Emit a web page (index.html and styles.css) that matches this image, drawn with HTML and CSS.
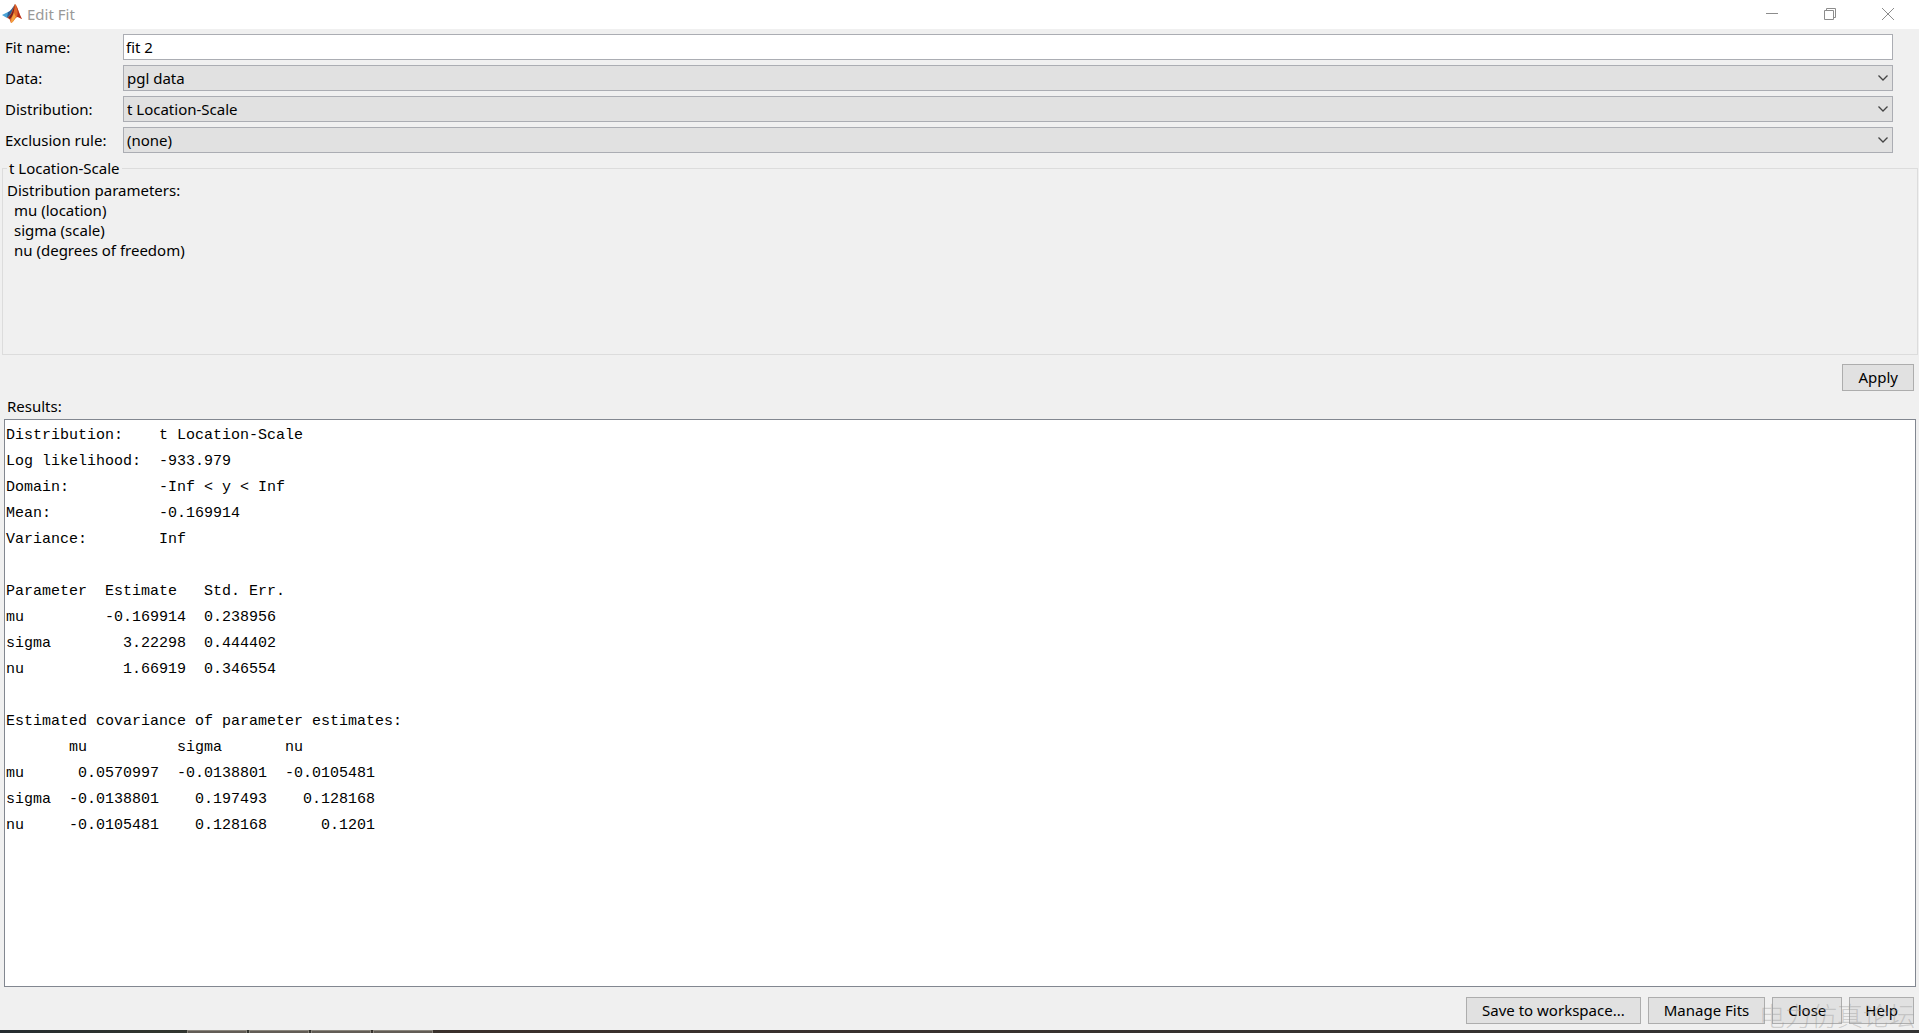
FILE: index.html
```html
<!DOCTYPE html>
<html lang="en">
<head>
<meta charset="utf-8">
<title>Edit Fit</title>
<link rel="stylesheet" href="styles.css">
</head>
<body>
<div class="window">
  <header class="titlebar">
    <svg class="logo" viewBox="0 0 20 20" aria-hidden="true">
      <path d="M0 11 L6 8 L9 11 L5 14 Z" fill="#4aa3d6"/>
      <path d="M6 8 C9 7 11 3 13 0 L11 9 L8 13 L5 14 Z" fill="#2d5f96"/>
      <path d="M13 0 C10 6 10 10 5 14 C8 14 8 17 9 19 C12 18 13 13 16 13 L20 15 C17 10 15 0 13 0 Z" fill="#e0662a"/>
      <path d="M13 0 C11 6 10 10 6 14 L8 15 C12 11 12 6 13 0 Z" fill="#7c2020"/>
      <path d="M14 2 C16 6 16 10 15 13 L16 13 L20 15 C17 10 16 4 14 2 Z" fill="#b52e20"/>
      <path d="M12 9 C11 12 9 14 9 19 C12 18 12 14 14 13 Z" fill="#f3a340"/>
    </svg>
    <span class="title">Edit Fit</span>
    <div class="controls">
      <button class="control" type="button" aria-label="Minimize"><svg viewBox="0 0 12 12"><path d="M0 5.5H12"/></svg></button>
      <button class="control" type="button" aria-label="Restore"><svg viewBox="0 0 12 12"><path d="M.5 2.500H9.500V11.500H.5ZM2.500 2.500V.5H11.500V9.500H9.500"/></svg></button>
      <button class="control" type="button" aria-label="Close window"><svg viewBox="0 0 12 12"><path d="M0 0L12 12M12 0L0 12"/></svg></button>
    </div>
  </header>
  <main class="content">
    <div class="form">
      <label for="name">Fit name:</label>
      <input class="field" id="name" type="text" value="fit 2">
      <label for="data">Data:</label>
      <select class="field select" id="data"><option>pgl data</option></select>
      <label for="dist">Distribution:</label>
      <select class="field select" id="dist"><option>t Location-Scale</option></select>
      <label for="rule">Exclusion rule:</label>
      <select class="field select" id="rule"><option>(none)</option></select>
    </div>
    <fieldset class="group">
      <legend>t Location-Scale</legend>
      <p>Distribution parameters:</p>
      <ul class="params">
        <li>mu (location)</li>
        <li>sigma (scale)</li>
        <li>nu (degrees of freedom)</li>
      </ul>
    </fieldset>
    <div class="apply"><button class="button" type="button">Apply</button></div>
    <label class="results-label" for="results">Results:</label>
    <textarea class="results" id="results" readonly spellcheck="false">
Distribution:    t Location-Scale
Log likelihood:  -933.979
Domain:          -Inf &lt; y &lt; Inf
Mean:            -0.169914
Variance:        Inf

Parameter  Estimate   Std. Err.
mu         -0.169914  0.238956
sigma        3.22298  0.444402
nu           1.66919  0.346554

Estimated covariance of parameter estimates:
       mu          sigma       nu
mu      0.0570997  -0.0138801  -0.0105481
sigma  -0.0138801    0.197493    0.128168
nu     -0.0105481    0.128168      0.1201</textarea>
    <footer class="actions">
      <button class="button" type="button">Save to workspace...</button>
      <button class="button" type="button">Manage Fits</button>
      <button class="button" type="button">Close</button>
      <button class="button" type="button">Help</button>
      <span class="watermark">电力仿真论坛</span>
    </footer>
  </main>
  <div class="taskbar"><i></i><i></i><i></i><i></i></div>
</div>
</body>
</html>
```
FILE: styles.css
```css
* {
  box-sizing: border-box;
}

body {
  margin: 0;
  background: #f0f0f0;
  color: #000;
  font: 15px/20px "Noto Sans", "Open Sans", sans-serif;
}

.window {
  display: flex;
  flex-direction: column;
  min-height: 100vh;
}

.titlebar {
  display: flex;
  align-items: center;
  gap: 5px;
  height: 29px;
  padding: 0 2px 2px;
  background: #fff;
  color: #999;
}

.logo {
  width: 20px;
  height: 20px;
}

.controls {
  display: flex;
  margin-left: auto;
}

.control {
  display: grid;
  place-items: center;
  width: 58px;
  height: 27px;
  padding: 0;
  border: 0;
  background: none;
}

.control svg {
  width: 12px;
  height: 12px;
  fill: none;
  stroke: #8c8c8c;
}

.content {
  flex: 1;
  display: flex;
  flex-direction: column;
}

.form {
  display: grid;
  grid-template-columns: 113px 1fr;
  gap: 5px;
  align-items: center;
  padding: 5px 26px 0 5px;
}

.field {
  width: 100%;
  height: 26px;
  padding: 0 2px;
  border: 1px solid #abadb3;
  border-radius: 0;
  background: #fff;
  color: inherit;
  font: inherit;
}

.select {
  appearance: none;
  padding: 0 24px 0 3px;
  background: #e1e1e1 url("data:image/svg+xml,%3Csvg xmlns='http://www.w3.org/2000/svg' width='10' height='6'%3E%3Cpath d='M.5.5L5 5L9.500.5' fill='none' stroke='%23444' stroke-width='1.300'/%3E%3C/svg%3E") no-repeat right 4px center;
}

.group {
  height: 197px;
  min-width: 0;
  margin: 5px 1px 0 2px;
  padding: 0 4px;
  border: 1px solid #dcdcdc;
}

.group legend {
  padding: 0 2px;
}

.group p {
  margin: 2px 0 0;
}

.params {
  margin: 0;
  padding: 0 0 0 7px;
  list-style: none;
}

.apply {
  display: flex;
  justify-content: flex-end;
  padding: 9px 5px 5px;
}

.button {
  height: 27px;
  padding: 0 15px 2px;
  border: 1px solid #adadad;
  border-radius: 0;
  background: #e1e1e1;
  color: inherit;
  font: inherit;
}

.results-label {
  padding: 0 7px 3px;
}

.results {
  flex: 1;
  min-height: 440px;
  margin: 0 3px 0 4px;
  padding: 3px 1px;
  border: 1px solid #828790;
  outline: 0;
  resize: none;
  background: #fff;
  color: #000;
  font: 15px/26px "Liberation Mono", monospace;
}

.actions {
  position: relative;
  display: flex;
  justify-content: flex-end;
  gap: 7px;
  padding: 10px 5px 6px;
}

/* Forum mark printed over the corner of the window */
.watermark {
  position: absolute;
  right: 4px;
  bottom: 0;
  color: rgba(150, 150, 150, 0.4);
  font: 300 26px/30px "Noto Sans CJK SC", sans-serif;
  pointer-events: none;
}

.taskbar {
  display: flex;
  gap: 2px;
  height: 3px;
  padding-left: 187px;
  background: linear-gradient(90deg, #252c30, #30352f 8%, #3a302c 24%, #333);
}

.taskbar i {
  width: 60px;
  border: 1px solid #8a857c;
  border-bottom: 0;
  background: #625c55;
}
```
